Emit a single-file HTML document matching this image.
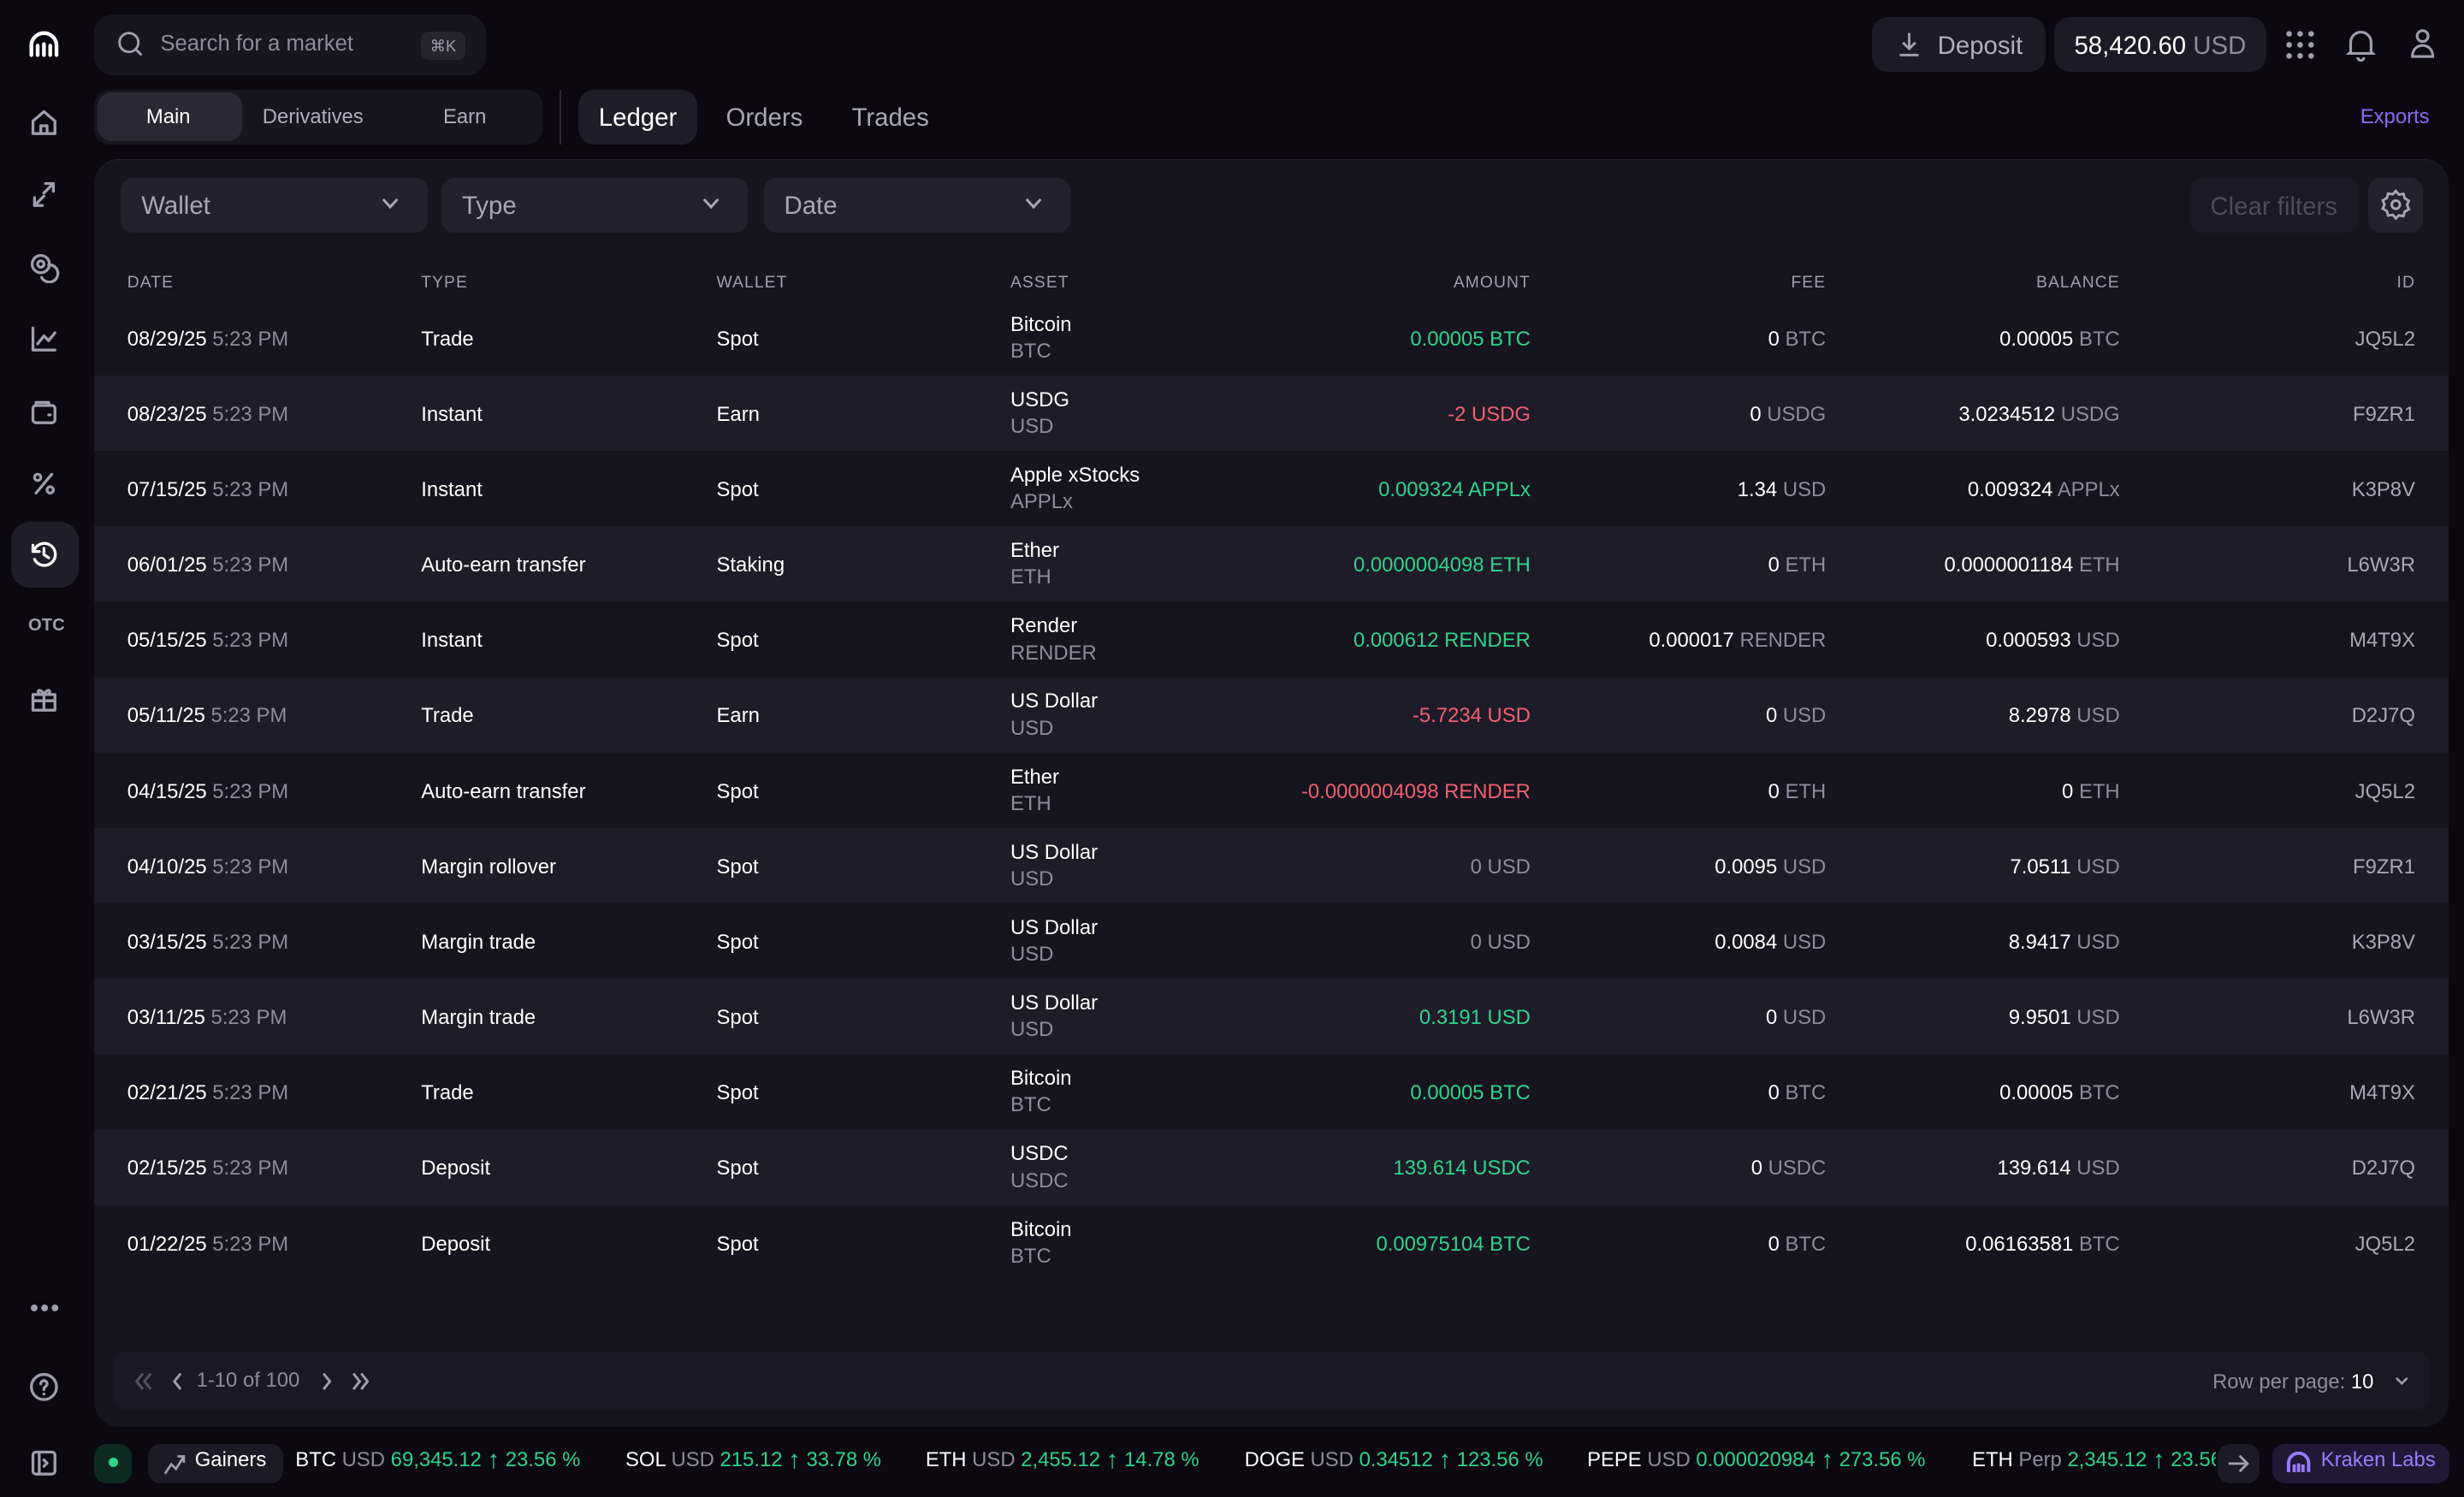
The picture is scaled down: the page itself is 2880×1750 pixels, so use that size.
<!DOCTYPE html>
<html><head><meta charset="utf-8"><style>
*{box-sizing:border-box;margin:0;padding:0}
html,body{width:2880px;height:1750px;overflow:hidden;background:#0b0812}
#root{zoom:1.8367;width:1568px;height:953px;position:relative;font-family:"Liberation Sans",sans-serif;color:#fff;font-size:13px}
.abs{position:absolute}
.g{color:#8e8c9c}
.grn{color:#2fd48a}
.red{color:#f0606f}
.side svg{position:absolute;left:18px;width:20px;height:20px;fill:none;stroke:#a09eae;stroke-width:1.8;stroke-linecap:round;stroke-linejoin:round}
.pill{position:absolute;background:#1c1a26;border-radius:10px}
.filter{position:absolute;top:113px;height:35px;width:195px;background:#23212e;border-radius:8px;color:#a9a7b5;font-size:16px;padding:8px 13px}
.filter svg{position:absolute;right:18px;top:13px;width:11px;height:8px;stroke:#a9a7b5;stroke-width:1.6;fill:none}
.hdr{position:absolute;top:174px;font-size:10.5px;letter-spacing:.6px;color:#a09eae}
.row{position:absolute;left:60px;width:1498px;height:48px}
.row.alt{background:#1e1c29}
.row div{position:absolute;top:1px;height:48px;line-height:48px;white-space:nowrap}
.row .asset{line-height:17px;top:7px}
.r{text-align:right}
.tick{position:absolute;top:922px;font-size:13px;white-space:nowrap}
.up{display:inline-block;font-size:16px;line-height:13px;vertical-align:-1px}
</style></head><body><div id="root">
<div class="side">
<svg style="top:19px" viewBox="0 0 20 20"><path d="M2 16V10a8 8 0 0 1 16 0v6M6 16V10M10 16V9M14 16V10" stroke="#fff" stroke-width="2.4"/></svg>
<svg style="top:68px" viewBox="0 0 20 20"><path d="M3 9l7-6 7 6v8H3zM8 17v-5h4v5"/></svg>
<svg style="top:114px" viewBox="0 0 20 20"><path d="M11 3h5v5M16 3l-6 6M9 17H4v-5M4 17l6-6"/></svg>
<svg style="top:160px" viewBox="0 0 20 20"><circle cx="8" cy="8" r="5.5"/><circle cx="8" cy="8" r="2"/><path d="M13 8.5a5.5 5.5 0 1 1-4.5 8"/></svg>
<svg style="top:206px" viewBox="0 0 20 20"><path d="M3 3v14h14M6 13l4-5 3 3 4-5"/></svg>
<svg style="top:252px" viewBox="0 0 20 20"><rect x="3" y="6" width="14" height="11" rx="2"/><path d="M5 6V4h8v2M13 12h1"/></svg>
<svg style="top:298px" viewBox="0 0 20 20"><path d="M15 4L5 16"/><circle cx="6" cy="6" r="2"/><circle cx="14" cy="14" r="2"/></svg>
<div class="abs" style="left:7px;top:332px;width:43px;height:42px;background:#1f1d2a;border-radius:12px"></div>
<svg style="top:343px;stroke:#fff" viewBox="0 0 20 20"><path d="M3 4v4h4"/><path d="M3.5 8A7 7 0 1 1 4 13"/><path d="M10 6v4l3 2"/></svg>
<div class="abs" style="left:18px;top:392px;font-size:11px;font-weight:bold;color:#a09eae">OTC</div>
<svg style="top:435px" viewBox="0 0 20 20"><rect x="3" y="7" width="14" height="10"/><path d="M3 11h14M10 7v10M10 7C8 3 5 4 7 7M10 7c2-4 5-3 3 0"/></svg>
<div class="abs" style="left:19px;top:824px;color:#a09eae;font-size:16px;letter-spacing:1px">•••</div>
<svg style="top:873px" viewBox="0 0 20 20"><circle cx="10" cy="10" r="8"/><path d="M8 8a2 2 0 1 1 3 1.7c-1 .6-1 1-1 2M10 14.5v.1"/></svg>
<svg style="top:921px" viewBox="0 0 20 20"><rect x="3" y="3" width="14" height="14" rx="2"/><path d="M7 3v14M10 8l2 2-2 2"/></svg>
</div>
<div class="pill" style="left:60px;top:9px;width:249px;height:39px;background:#17151f;border-radius:12px"></div>
<svg class="abs" style="left:74px;top:19px" width="18" height="18" viewBox="0 0 18 18" fill="none" stroke="#a09eae" stroke-width="1.6"><circle cx="8" cy="8" r="6"/><path d="M12.5 12.5l3.5 3.5"/></svg>
<div class="abs g" style="left:102px;top:20px;font-size:14px">Search for a market</div>
<div class="abs" style="left:268px;top:20px;width:28px;height:18px;background:#26242f;border-radius:5px;color:#a09eae;font-size:10px;text-align:center;line-height:18px">⌘K</div>
<div class="pill" style="left:60px;top:57px;width:285px;height:35px;background:#17151f"></div>
<div class="pill" style="left:62px;top:59px;width:92px;height:31px;background:#2a2835;border-radius:9px"></div>
<div class="abs" style="left:93px;top:67px;font-size:13px">Main</div>
<div class="abs" style="left:167px;top:67px;font-size:13px;color:#b0aebd">Derivatives</div>
<div class="abs" style="left:282px;top:67px;font-size:13px;color:#b0aebd">Earn</div>
<div class="abs" style="left:356px;top:57px;width:1px;height:35px;background:#2a2835"></div>
<div class="pill" style="left:368px;top:57px;width:76px;height:35px;background:#1f1d2a"></div>
<div class="abs" style="left:381px;top:66px;font-size:16px">Ledger</div>
<div class="abs" style="left:462px;top:66px;font-size:16px;color:#a9a7b5">Orders</div>
<div class="abs" style="left:542px;top:66px;font-size:16px;color:#a9a7b5">Trades</div>
<div class="pill" style="left:1191px;top:11px;width:111px;height:35px"></div>
<svg class="abs" style="left:1206px;top:19px" width="18" height="18" viewBox="0 0 18 18" fill="none" stroke="#a09eae" stroke-width="1.6"><path d="M9 2v10M5 8l4 4 4-4M3 16h12"/></svg>
<div class="abs" style="left:1233px;top:20px;font-size:16px;color:#b0aebd">Deposit</div>
<div class="pill" style="left:1307px;top:11px;width:135px;height:35px"></div>
<div class="abs" style="left:1320px;top:20px;font-size:16px">58,420.60 <span class="g">USD</span></div>
<svg class="abs" style="left:1454px;top:19px" width="19" height="19" viewBox="0 0 19 19" fill="#a09eae"><circle cx="2.5" cy="2.5" r="1.8"/><circle cx="9.5" cy="2.5" r="1.8"/><circle cx="16.5" cy="2.5" r="1.8"/><circle cx="2.5" cy="9.5" r="1.8"/><circle cx="9.5" cy="9.5" r="1.8"/><circle cx="16.5" cy="9.5" r="1.8"/><circle cx="2.5" cy="16.5" r="1.8"/><circle cx="9.5" cy="16.5" r="1.8"/><circle cx="16.5" cy="16.5" r="1.8"/></svg>
<svg class="abs" style="left:1493px;top:18px" width="19" height="21" viewBox="0 0 19 21" fill="none" stroke="#a09eae" stroke-width="1.7"><path d="M3 15V9a6.5 6.5 0 0 1 13 0v6l1 1H2zM7.5 18.5a2 2 0 0 0 4 0"/></svg>
<svg class="abs" style="left:1533px;top:18px" width="17" height="20" viewBox="0 0 17 20" fill="none" stroke="#a09eae" stroke-width="1.7"><circle cx="8.5" cy="5" r="3.5"/><path d="M2 18c0-4 2.5-7 6.5-7s6.5 3 6.5 7z"/></svg>
<div class="abs" style="left:1502px;top:67px;font-size:13px;color:#8b6cf6">Exports</div>
<div class="abs" style="left:60px;top:101px;width:1498px;height:807px;background:#16141f;border-radius:16px;border-top:1px solid #22202c"></div>
<div class="filter" style="left:77px;padding-top:9px">Wallet<svg viewBox="0 0 11 8"><path d="M1 1l4.5 5L10 1"/></svg></div>
<div class="filter" style="left:281px;padding-top:9px">Type<svg viewBox="0 0 11 8"><path d="M1 1l4.5 5L10 1"/></svg></div>
<div class="filter" style="left:486px;padding-top:9px">Date<svg viewBox="0 0 11 8"><path d="M1 1l4.5 5L10 1"/></svg></div>
<div class="abs" style="left:1393px;top:113px;width:108px;height:35px;background:#1b1925;border-radius:8px;color:#4e4c5a;font-size:16px;text-align:center;line-height:37px">Clear filters</div>
<div class="abs" style="left:1507px;top:113px;width:35px;height:35px;background:#23212e;border-radius:8px"></div>
<svg class="abs" style="left:1514px;top:120px" width="21" height="21" viewBox="0 0 24 24" fill="none" stroke="#a9a7b5" stroke-width="1.8"><circle cx="12" cy="12" r="3"/><path d="M12 2l2.2 2.6 3.4-.5.9 3.3 3 1.7-1.3 3.1 1.3 3.1-3 1.7-.9 3.3-3.4-.5L12 22l-2.2-2.6-3.4.5-.9-3.3-3-1.7L3.8 12 2.5 8.9l3-1.7.9-3.3 3.4.5z"/></svg>
<div class="hdr" style="left:81px">DATE</div>
<div class="hdr" style="left:268px">TYPE</div>
<div class="hdr" style="left:456px">WALLET</div>
<div class="hdr" style="left:643px">ASSET</div>
<div class="hdr r" style="left:874px;width:100px">AMOUNT</div>
<div class="hdr r" style="left:1062px;width:100px">FEE</div>
<div class="hdr r" style="left:1249px;width:100px">BALANCE</div>
<div class="hdr r" style="left:1437px;width:100px">ID</div>
<div id="rows"></div>
<div class="abs" style="left:72px;top:860px;width:1474px;height:37px;background:#1a1824;border-radius:8px"></div>
<svg class="abs" style="left:85px;top:872px" width="150" height="14" viewBox="0 0 150 14" fill="none" stroke-width="1.6"><path d="M6 2L2 7l4 5M11 2L7 7l4 5" stroke="#55535f"/><path d="M30 2l-4 5 4 5" stroke="#a09eae"/><path d="M121 2l4 5-4 5M140 2l4 5-4 5M145 2l4 5-4 5" stroke="#a09eae"/></svg>
<div class="abs" style="left:125px;top:871px;font-size:13px;color:#8e8c9c">1-10 of 100</div>
<div class="abs" style="left:1408px;top:872px;font-size:13px;color:#8e8c9c">Row per page: <span style="color:#fff">10</span></div>
<svg class="abs" style="left:1524px;top:876px" width="9" height="6" viewBox="0 0 9 6" fill="none" stroke="#a09eae" stroke-width="1.4"><path d="M1 1l3.5 3.5L8 1"/></svg>
<div class="abs" style="left:60px;top:919px;width:24px;height:25px;background:#0d2a20;border-radius:8px"></div>
<div class="abs" style="left:69px;top:928px;width:6px;height:6px;background:#2fd48a;border-radius:50%"></div>
<div class="abs" style="left:94px;top:919px;width:86px;height:25px;background:#1c1a26;border-radius:8px"></div>
<svg class="abs" style="left:104px;top:924px" width="15" height="15" viewBox="0 0 15 15" fill="none" stroke="#a09eae" stroke-width="1.5"><path d="M1 14l4-6 3 3 5-8M9 3h4v4"/></svg>
<div class="tick" style="left:124px">Gainers</div>
<div class="tick" style="left:188px">BTC <span class="g">USD</span> <span class="grn">69,345.12 <span class="up">↑</span> 23.56 %</span></div>
<div class="tick" style="left:398px">SOL <span class="g">USD</span> <span class="grn">215.12 <span class="up">↑</span> 33.78 %</span></div>
<div class="tick" style="left:589px">ETH <span class="g">USD</span> <span class="grn">2,455.12 <span class="up">↑</span> 14.78 %</span></div>
<div class="tick" style="left:792px">DOGE <span class="g">USD</span> <span class="grn">0.34512 <span class="up">↑</span> 123.56 %</span></div>
<div class="tick" style="left:1010px">PEPE <span class="g">USD</span> <span class="grn">0.000020984 <span class="up">↑</span> 273.56 %</span></div>
<div class="tick" style="left:1255px;width:155px;overflow:hidden">ETH <span class="g">Perp</span> <span class="grn">2,345.12 <span class="up">↑</span> 23.56</span></div>
<div class="abs" style="left:1411px;top:919px;width:27px;height:25px;background:#1c1a26;border-radius:8px"></div>
<svg class="abs" style="left:1417px;top:925px" width="15" height="13" viewBox="0 0 15 13" fill="none" stroke="#a09eae" stroke-width="1.6"><path d="M1 6.5h12M8 1.5l5 5-5 5"/></svg>
<div class="abs" style="left:1446px;top:919px;width:113px;height:25px;background:#221835;border-radius:8px"></div>
<svg class="abs" style="left:1455px;top:924px" width="16" height="14" viewBox="0 0 20 17" fill="none" stroke="#9a7bff" stroke-width="2.6"><path d="M2 16V9a8 8 0 0 1 16 0v7M6.5 16V10M10 16V9M13.5 16V10"/></svg>
<div class="tick" style="left:1477px;color:#9a7bff">Kraken Labs</div>
</div>
<script>
const D=[
["08/29/25","Trade","Spot","Bitcoin","BTC",["0.00005 BTC","grn"],["0","BTC"],["0.00005","BTC"],"JQ5L2"],
["08/23/25","Instant","Earn","USDG","USD",["-2 USDG","red"],["0","USDG"],["3.0234512","USDG"],"F9ZR1"],
["07/15/25","Instant","Spot","Apple xStocks","APPLx",["0.009324 APPLx","grn"],["1.34","USD"],["0.009324","APPLx"],"K3P8V"],
["06/01/25","Auto-earn transfer","Staking","Ether","ETH",["0.0000004098 ETH","grn"],["0","ETH"],["0.0000001184","ETH"],"L6W3R"],
["05/15/25","Instant","Spot","Render","RENDER",["0.000612 RENDER","grn"],["0.000017","RENDER"],["0.000593","USD"],"M4T9X"],
["05/11/25","Trade","Earn","US Dollar","USD",["-5.7234 USD","red"],["0","USD"],["8.2978","USD"],"D2J7Q"],
["04/15/25","Auto-earn transfer","Spot","Ether","ETH",["-0.0000004098 RENDER","red"],["0","ETH"],["0","ETH"],"JQ5L2"],
["04/10/25","Margin rollover","Spot","US Dollar","USD",["0 USD","g"],["0.0095","USD"],["7.0511","USD"],"F9ZR1"],
["03/15/25","Margin trade","Spot","US Dollar","USD",["0 USD","g"],["0.0084","USD"],["8.9417","USD"],"K3P8V"],
["03/11/25","Margin trade","Spot","US Dollar","USD",["0.3191 USD","grn"],["0","USD"],["9.9501","USD"],"L6W3R"],
["02/21/25","Trade","Spot","Bitcoin","BTC",["0.00005 BTC","grn"],["0","BTC"],["0.00005","BTC"],"M4T9X"],
["02/15/25","Deposit","Spot","USDC","USDC",["139.614 USDC","grn"],["0","USDC"],["139.614","USD"],"D2J7Q"],
["01/22/25","Deposit","Spot","Bitcoin","BTC",["0.00975104 BTC","grn"],["0","BTC"],["0.06163581","BTC"],"JQ5L2"]];
let h="";D.forEach((r,i)=>{h+=`<div class="row${i%2?' alt':''}" style="top:${191+i*48}px">
<div style="left:21px">${r[0]} <span class="g">5:23 PM</span></div>
<div style="left:208px">${r[1]}</div><div style="left:396px">${r[2]}</div>
<div class="asset" style="left:583px">${r[3]}<br><span class="g">${r[4]}</span></div>
<div class="r ${r[5][1]}" style="left:714px;width:200px">${r[5][0]}</div>
<div class="r" style="left:902px;width:200px">${r[6][0]} <span class="g">${r[6][1]}</span></div>
<div class="r" style="left:1089px;width:200px">${r[7][0]} <span class="g">${r[7][1]}</span></div>
<div class="r" style="left:1277px;width:200px;color:#a9a7b5">${r[8]}</div></div>`});
document.getElementById("rows").innerHTML=h;
</script>
</body></html>
